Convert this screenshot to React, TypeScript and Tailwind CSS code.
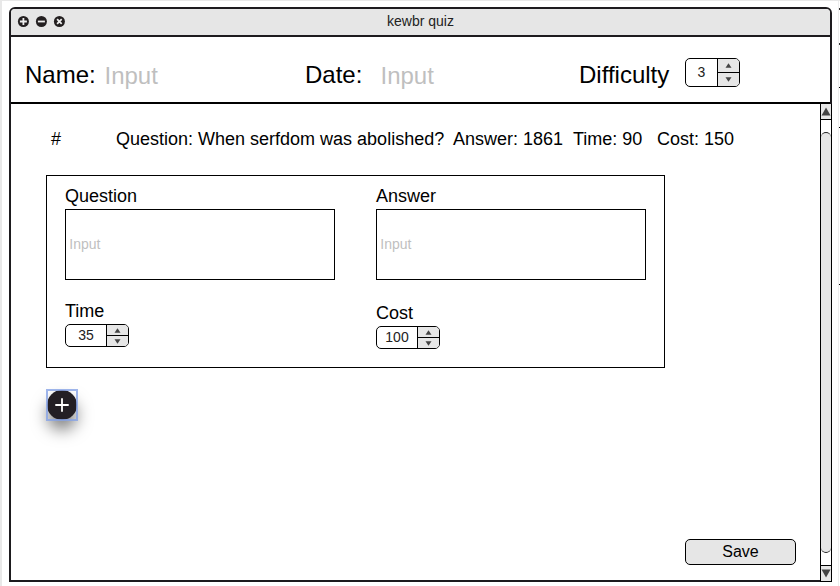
type StepperProps = { value: string; size: "large" | "small" };

function Stepper({ value, size }: StepperProps) {
  const large = size === "large";
  return (
    <div
      className={`flex shrink-0 overflow-hidden rounded-[5px] border border-black bg-white ${
        large ? "h-[29px] w-[55px]" : "h-[23px] w-[64px]"
      }`}
    >
      <div
        className={`flex items-center justify-center text-[14px] leading-none text-[#222] ${
          large ? "w-[31px]" : "w-[40px] pb-[2px]"
        }`}
      >
        {value}
      </div>
      <div className="flex flex-1 flex-col border-l border-black bg-[#e6e6e6]">
        <div className="flex flex-1 items-center justify-center border-b border-black">
          <svg width="7" height="5" viewBox="0 0 7 5">
            <path d="M3.5 0.3 6.5 4.7h-6z" fill="#444" />
          </svg>
        </div>
        <div className="flex flex-1 items-center justify-center">
          <svg width="7" height="5" viewBox="0 0 7 5">
            <path d="M3.5 4.7 6.5 0.3h-6z" fill="#444" />
          </svg>
        </div>
      </div>
    </div>
  );
}

function WindowButton({ d }: { d: string }) {
  return (
    <svg width="12" height="12" viewBox="0 0 12 12">
      <circle cx="6.4" cy="5.5" r="5.5" fill="#231f20" />
      <path d={d} stroke="#eee" strokeWidth="1.8" fill="none" />
    </svg>
  );
}

function Field({ label, value, className }: { label: string; value: string; className: string }) {
  return (
    <div className="w-[270px]">
      <div className="h-[23px] text-[18px] leading-[22px]">{label}</div>
      <div className="mt-[1px] flex h-[71px] items-center border border-black pb-[2px] pl-[3.3px] text-[14px] leading-none text-[#bfbfbf]">
        Input
      </div>
      <div className={className}>
        <div className="h-[24px] text-[18px] leading-[24px]">{label === "Question" ? "Time" : "Cost"}</div>
        <div className="mt-px">
          <Stepper value={value} size="small" />
        </div>
      </div>
    </div>
  );
}

function Scrollbar() {
  return (
    <div className="z-10 -mr-[2px] -mb-[2px] flex w-[12px] shrink-0 flex-col border-x border-b border-black bg-white">
      <div className="flex h-[16px] items-center justify-center border-b border-black bg-[#e6e6e6]">
        <svg width="10" height="9" viewBox="0 0 10 9">
          <path d="M5 0.5 9.5 8.5h-9z" fill="#444" />
        </svg>
      </div>
      <div className="mt-[12px] mb-[12px] flex-1 rounded-[5px] border-y border-[#222] bg-[#e6e6e6]" />
      <div className="flex h-[16px] items-center justify-center border-t border-black bg-[#e6e6e6]">
        <svg width="10" height="9" viewBox="0 0 10 9">
          <path d="M5 8.5 9.5 0.5h-9z" fill="#444" />
        </svg>
      </div>
    </div>
  );
}

export default function App() {
  return (
    <div className="flex h-[586px] w-[840px] overflow-hidden border-t border-l-2 border-[#e8e8e8] bg-white font-['Liberation_Sans',Arial,sans-serif] text-black">
      <div className="mt-[6px] ml-[7px] flex h-[575px] w-[823px] shrink-0 flex-col rounded-t-[6px] border-2 border-[#1d1b1e]">
        <header className="grid h-[28px] shrink-0 grid-cols-[1fr_auto_1fr] items-center rounded-t-[4px] border-b-2 border-[#1d1b1e] bg-[#e6e6e6]">
          <div className="flex gap-[6px] pl-[6px]">
            <WindowButton d="M6.4 2v7M2.9 5.5h7" />
            <WindowButton d="M2.9 5.5h7" />
            <WindowButton d="M4.1 3.2l4.6 4.6M8.7 3.2l-4.6 4.6" />
          </div>
          <h1 className="pb-[2px] text-[14px] leading-none text-[#222]">kewbr quiz</h1>
        </header>

        <div className="flex h-[67px] shrink-0 items-center border-b-2 border-black pl-[14px] text-[24px] leading-none">
          <span className="w-[79.5px] pt-[11px]">Name:</span>
          <span className="w-[200.5px] pt-[13px] text-[#bfbfbf]">Input</span>
          <span className="w-[75.5px] pt-[11px]">Date:</span>
          <span className="w-[198.5px] pt-[13px] text-[#bfbfbf]">Input</span>
          <span className="w-[106px] pt-[11px]">Difficulty</span>
          <div className="pt-[5px]">
            <Stepper value="3" size="large" />
          </div>
        </div>

        <div className="flex min-h-0 flex-1">
          <main className="flex flex-1 flex-col pl-[35px]">
            <div className="mt-[23px] flex h-[24px] whitespace-pre pl-[5px] text-[18px] leading-[24px]">
              <span className="w-[65px]">#</span>
              <span className="w-[337px]">Question: When serfdom was abolished?</span>
              <span className="w-[120px]">Answer: 1861</span>
              <span className="w-[84px]">Time: 90</span>
              <span>Cost: 150</span>
            </div>

            <section className="mt-[24px] flex h-[193px] w-[619px] gap-[41px] border border-black pt-[9px] pl-[18px]">
              <Field label="Question" value="35" className="mt-[19px]" />
              <Field label="Answer" value="100" className="mt-[21px]" />
            </section>

            <button className="relative mt-[21px] flex size-[32px] items-center justify-center after:absolute after:inset-0 after:border-2 after:border-[#86a3e6]/80">
              <span className="flex size-[30px] shrink-0 items-center justify-center rounded-full bg-[#231f25] shadow-[0_10px_16px_rgba(0,0,0,0.5)]">
                <svg width="14" height="14" viewBox="0 0 14 14">
                  <path d="M7 0.3v13.4M0.3 7h13.4" stroke="#fff" strokeWidth="1.8" />
                </svg>
              </span>
            </button>

            <button className="mt-auto mr-[24px] mb-[15px] h-[26px] w-[111px] self-end rounded-[5px] border border-black bg-[#e6e6e6] text-[16px] leading-[24px]">
              Save
            </button>
          </main>
          <Scrollbar />
        </div>
      </div>

      <div className="ml-[6px] flex w-[2px] shrink-0 flex-col items-end border-l border-[#eee]">
        <div className="mt-[7px] h-[2px] w-px bg-[#333]" />
        <div className="mt-[33px] h-[2px] w-px bg-[#333]" />
        <div className="mt-[42px] h-px w-px bg-black" />
        <div className="mt-[39px] h-px w-px bg-black" />
        <div className="mt-[156px] h-px w-px bg-black" />
      </div>
    </div>
  );
}
